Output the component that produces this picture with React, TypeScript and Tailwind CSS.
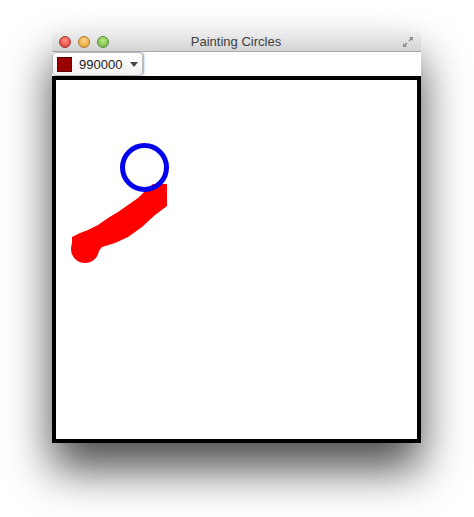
import React from "react";

// small diagonal "full screen" arrows in the title bar
const ResizeIcon = () => (
  <svg width="12" height="12" viewBox="0 0 12 12">
    <path d="M7 1 H11 V5 L9.6 3.6 L7.6 5.6 L6.4 4.4 L8.4 2.4 Z" fill="#8e8e8e" />
    <path d="M5 11 H1 V7 L2.4 8.4 L4.4 6.4 L5.6 7.6 L3.6 9.6 Z" fill="#8e8e8e" />
  </svg>
);

const TrafficLight = ({ color, ring }: { color: string; ring: string }) => (
  <div
    className="w-[12px] h-[12px] rounded-full border"
    style={{ background: color, borderColor: ring }}
  />
);

const App = () => {
  return (
    <div className="w-[474px] h-[517px] bg-white pt-[32px] pl-[52px] font-['Liberation_Sans',Arial,sans-serif]">
      <div className="w-[369px] h-[411px] flex flex-col rounded-t-[5px] shadow-[0_26px_45px_rgba(0,0,0,0.7)]">
        {/* title bar */}
        <div className="h-[20px] flex items-center px-[7px] rounded-t-[5px] bg-gradient-to-b from-[#ededed] to-[#d4d4d4] border-b border-[#a9a9a9] relative">
          <div className="flex gap-[7px]">
            <TrafficLight color="radial-gradient(circle at 50% 35%, #ff8f86, #d8332c)" ring="#a8342e" />
            <TrafficLight color="radial-gradient(circle at 50% 35%, #ffd58a, #de9a26)" ring="#ad7a2a" />
            <TrafficLight color="radial-gradient(circle at 50% 35%, #b4ea86, #6cae3a)" ring="#5b8d33" />
          </div>
          <div className="flex-1 text-center text-[13px] text-[#404040] leading-none pr-[39px]">
            Painting Circles
          </div>
          <ResizeIcon />
        </div>

        {/* toolbar with colour combo */}
        <div className="h-[24px] bg-white flex">
          <div className="w-[91px] h-[24px] flex items-center gap-[7px] pl-[4px] rounded-[4px] border border-[#b9b9b9] bg-gradient-to-b from-white to-[#f1f1f1] shadow-[1px_0_2px_#7eaee6]">
            <div className="w-[15px] h-[15px] bg-[#990000] border border-[#5a0000]" />
            <span className="text-[13px] text-[#222] leading-none">990000</span>
            <svg width="8" height="5" viewBox="0 0 8 5" className="ml-[1px]">
              <path d="M0 0 H8 L4 5 Z" fill="#444" />
            </svg>
          </div>
        </div>

        {/* drawing canvas */}
        <div className="flex-1 border-4 border-black bg-white relative">
          <svg className="absolute inset-0" width="361" height="359" viewBox="0 0 361 359">
            <path
              d="M16,157 L24,153 L32,150 L42,145 L52,138 L62,132 L72,125 L82,118 L92,108 L97,104 L111,104 L111,126 L99,135 L86,147 L72,157 L59,163 L46,167 L42,172 L16,172 Z"
              fill="#ff0000"
            />
            <circle cx="29" cy="169" r="14" fill="#ff0000" />
            <circle cx="88.5" cy="87.5" r="22" fill="none" stroke="#0000ee" strokeWidth="5" />
          </svg>
        </div>
      </div>
    </div>
  );
};

export default App;
